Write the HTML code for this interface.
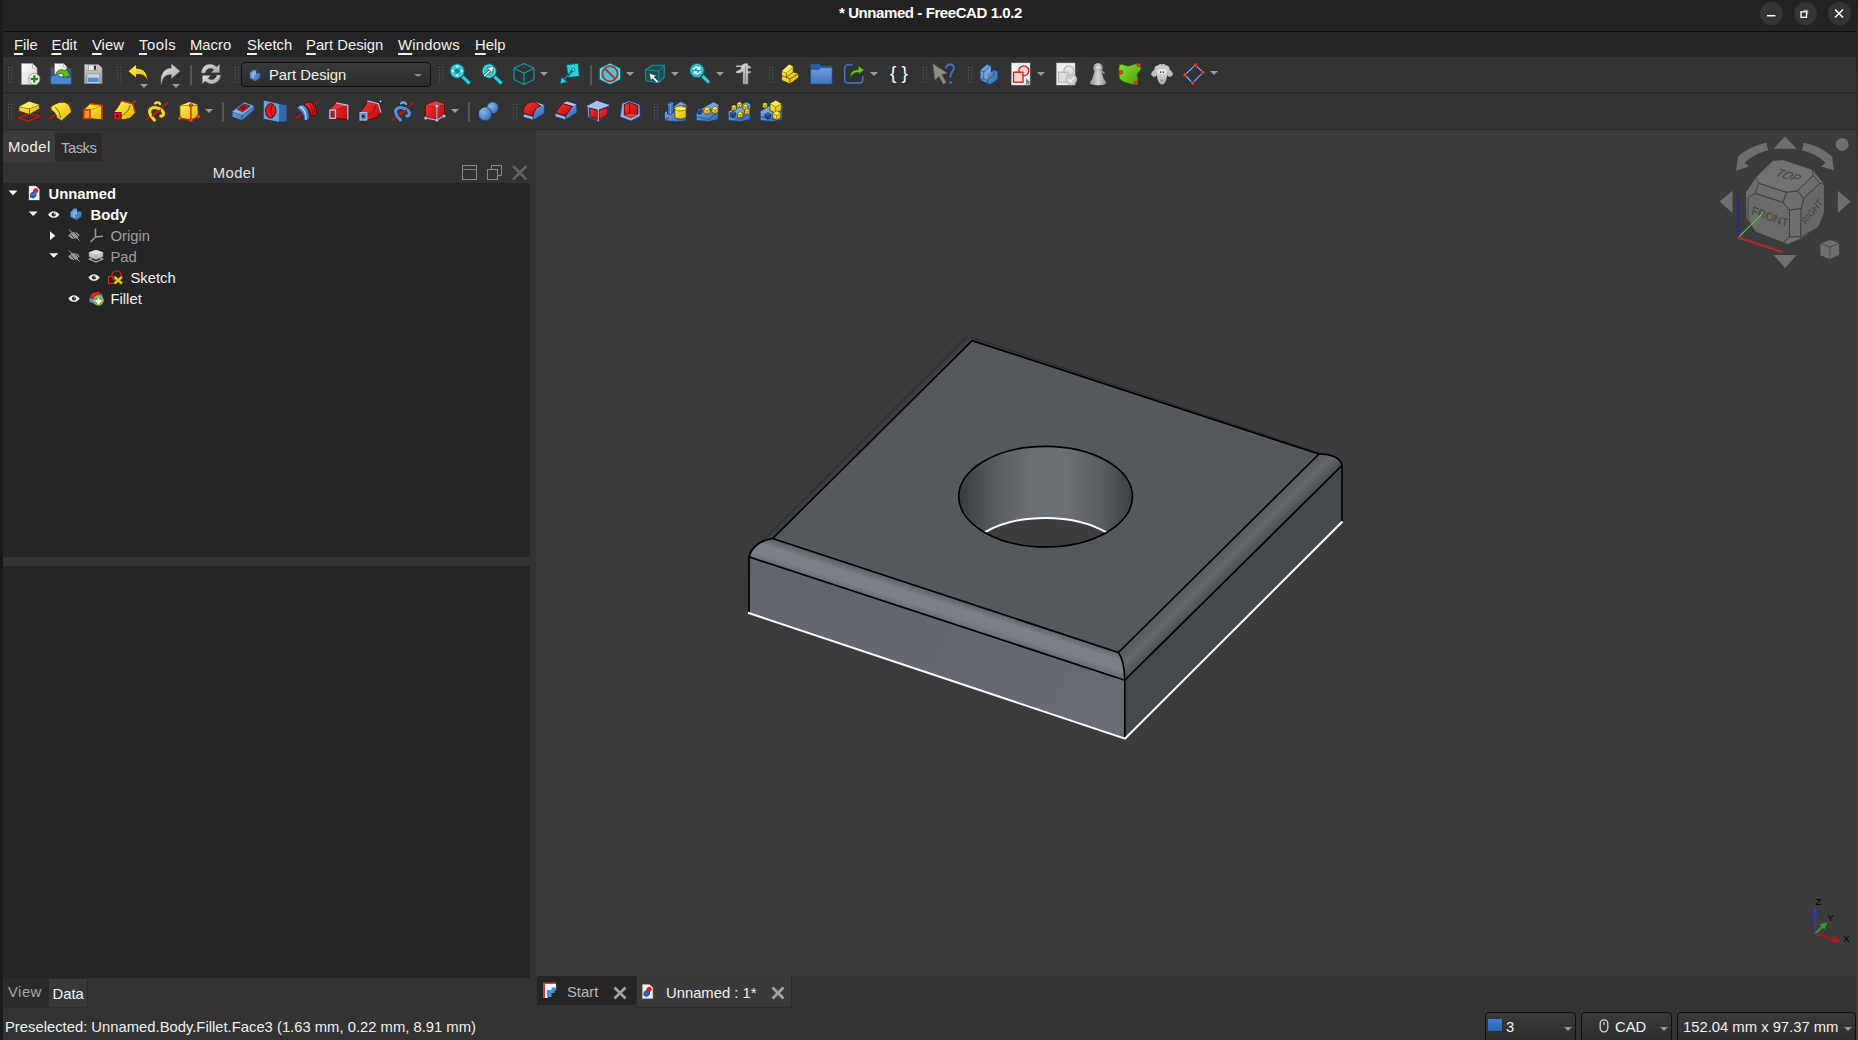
<!DOCTYPE html>
<html lang="en">
<head>
<meta charset="utf-8">
<title>* Unnamed - FreeCAD 1.0.2</title>
<style>
*{box-sizing:border-box;margin:0;padding:0}
html,body{width:1858px;height:1040px;overflow:hidden;background:#333333;}
body{position:relative;font-family:"Liberation Sans",sans-serif;font-size:14.8px;color:#f0f0f0;}
.abs{position:absolute}
#edgeL{left:0;top:0;width:3px;height:1040px;background:#1a1a1a}
#edgeR{left:1856px;top:0;width:2px;height:1040px;background:linear-gradient(#2a1b23 0,#33222b 57px,#3c2a34 130px,#4a3742 200px,#4a3742 100%)}
#titlebar{left:3px;top:0;width:1853px;height:31px;background:#222222}
#titleline{left:3px;top:31px;width:1853px;height:1px;background:#0c0c0c}
#title{left:1.500px;top:0;width:1858px;height:26px;line-height:26px;text-align:center;font-weight:bold;font-size:15px;letter-spacing:-.42px;color:#ffffff;white-space:pre}
.wbtn{top:2px;width:23px;height:23px;border-radius:50%;background:#353535}
#menubar{left:3px;top:32px;width:1853px;height:25px;background:#252525}
.mi{top:33px;height:25px;line-height:25px;white-space:pre;color:#f2f2f2}
.mi u{text-decoration:underline;text-underline-offset:2.500px;text-decoration-thickness:1.800px}
#tb1{left:3px;top:57px;width:1853px;height:36px;background:#333333}
#tbsep{left:3px;top:92px;width:1853px;height:2px;background:#2a2a2a}
#tb2{left:3px;top:94px;width:1853px;height:35px;background:#333333}
#tbbot{left:3px;top:129px;width:1853px;height:1px;background:#2a2a2a}
.ic{position:absolute;width:24px;height:24px;overflow:visible}
.grip{position:absolute;width:6px;height:18px;background-image:radial-gradient(circle,#5a5a5a 0.8px,transparent 1.1px);background-size:3px 3px}
.vsep{position:absolute;width:2px;height:20px;background:#555}
.dd{position:absolute;width:0;height:0;border-left:4px solid transparent;border-right:4px solid transparent;border-top:4px solid #9a9a9a}
#view3d{left:536px;top:130px;width:1320px;height:846px;background:#3c3c3c}
#tree{left:3px;top:183px;width:527px;height:374px;background:#252525}
#prop{left:3px;top:566px;width:527px;height:412px;background:#252525}
#split{left:3px;top:557px;width:527px;height:9px;background:#333}
#wbcombo{left:241px;top:62px;width:190px;height:25px;border:1px solid #0e0e0e;border-radius:4px;background:linear-gradient(#3a3a3a,#2c2c2c);font-size:14.8px;color:#f0f0f0}
.sb{top:1012px;height:30px;border:1px solid #0e0e0e;border-radius:4px;background:linear-gradient(#3a3a3a,#2e2e2e)}
.tr{position:absolute;height:21px;line-height:21px;white-space:pre;font-size:14.8px}
</style>
</head>
<body>
<div class="abs" id="edgeL"></div>
<div class="abs" id="edgeR"></div>
<div class="abs" id="titlebar"></div>
<div class="abs" id="titleline"></div>
<div class="abs" id="title">* Unnamed - FreeCAD 1.0.2</div>
<div class="abs" id="menubar"></div>
<div class="abs" id="tb1"></div>
<div class="abs" id="tbsep"></div>
<div class="abs" id="tb2"></div>
<div class="abs" id="tbbot"></div>
<div class="abs" id="view3d"></div>
<div class="abs" id="tree"></div>
<div class="abs" id="split"></div>
<div class="abs" id="prop"></div>
<div class="abs mi" style="left:14px"><u>F</u>ile</div>
<div class="abs mi" style="left:51.5px"><u>E</u>dit</div>
<div class="abs mi" style="left:92px"><u>V</u>iew</div>
<div class="abs mi" style="left:139px;letter-spacing:.55px"><u>T</u>ools</div>
<div class="abs mi" style="left:190px"><u>M</u>acro</div>
<div class="abs mi" style="left:247px"><u>S</u>ketch</div>
<div class="abs mi" style="left:306px"><u>P</u>art Design</div>
<div class="abs mi" style="left:398px;letter-spacing:.25px"><u>W</u>indows</div>
<div class="abs mi" style="left:475px"><u>H</u>elp</div>
<!--MENU-->
<div class="abs wbtn" style="left:1760px"></div><div class="abs wbtn" style="left:1793.500px"></div><div class="abs wbtn" style="left:1827.500px"></div>
<svg class="abs" style="left:1760px;top:2px" width="92" height="23" viewBox="0 0 92 23"><path d="M7 13.700h8.500" stroke="#fff" stroke-width="1.500"/><path d="M43.500 8.300h4.200v4.200" fill="none" stroke="#aaa" stroke-width="1"/><rect x="41" y="9.800" width="5.500" height="5.500" fill="none" stroke="#fff" stroke-width="1.300"/><path d="M75 7.500l8 8M83 7.500l-8 8" stroke="#fff" stroke-width="1.500"/></svg>

<svg width="0" height="0" style="position:absolute"><defs>
<linearGradient id="gy" x1="0" y1="0" x2="1" y2="1"><stop offset="0" stop-color="#fff45e"/><stop offset="1" stop-color="#e2b400"/></linearGradient>
<linearGradient id="gr" x1="0" y1="0" x2="1" y2="1"><stop offset="0" stop-color="#f43a3a"/><stop offset="1" stop-color="#b80808"/></linearGradient>
<linearGradient id="gb" x1="0" y1="0" x2="1" y2="1"><stop offset="0" stop-color="#86b2e6"/><stop offset="1" stop-color="#2f65ac"/></linearGradient>
<linearGradient id="gpage" x1="0" y1="0" x2="1" y2="1"><stop offset="0" stop-color="#ffffff"/><stop offset="1" stop-color="#d4d4d4"/></linearGradient>
<linearGradient id="ggrey" x1="0" y1="0" x2="0" y2="1"><stop offset="0" stop-color="#d2d2cc"/><stop offset="1" stop-color="#9c9c96"/></linearGradient>
<linearGradient id="gsil" x1="0" y1="0" x2="1" y2="1"><stop offset="0" stop-color="#e2e2e2"/><stop offset="1" stop-color="#a6a6a6"/></linearGradient>
<linearGradient id="gsil2" x1="0" y1="0" x2="1" y2="0"><stop offset="0" stop-color="#8c8c8c"/><stop offset=".5" stop-color="#d6d6d6"/><stop offset="1" stop-color="#8c8c8c"/></linearGradient>
<linearGradient id="gfold" x1="0" y1="0" x2="0" y2="1"><stop offset="0" stop-color="#6f9fe0"/><stop offset="1" stop-color="#3f74c2"/></linearGradient>
<linearGradient id="ggreen" x1="0" y1="0" x2="1" y2="1"><stop offset="0" stop-color="#8ae234"/><stop offset="1" stop-color="#4e9a06"/></linearGradient>
<radialGradient id="gbs" cx=".35" cy=".35" r=".8"><stop offset="0" stop-color="#8ab4e8"/><stop offset="1" stop-color="#2f62a8"/></radialGradient>
<linearGradient id="gsheep" x1="0" y1="0" x2="0" y2="1"><stop offset="0" stop-color="#e6e6e6"/><stop offset="1" stop-color="#a8a8a8"/></linearGradient>
</defs></svg>
<svg class="ic" style="left:17px;top:62px" viewBox="0 0 24 24"><path d="M4.5 1.5h11l4.5 4.5v16.5h-15.5z" fill="url(#gpage)" stroke="#9a9a9a" stroke-width=".8"/><path d="M15.5 1.5v4.5h4.5z" fill="#fff" stroke="#9a9a9a" stroke-width=".6"/><circle cx="17.3" cy="17" r="5.6" fill="#f4f4f4" stroke="#8a8a8a" stroke-width=".8"/><path d="M17.3 13.3v7.4M13.6 17h7.4" stroke="#2f8a12" stroke-width="2.3"/></svg>
<svg class="ic" style="left:49px;top:62px" viewBox="0 0 24 24"><path d="M5.5 1.5h9l3.5 3.5v11h-12.5z" fill="url(#gpage)" stroke="#8a8a8a" stroke-width=".7"/><path d="M14.5 1.5v3.5h3.5z" fill="#fff" stroke="#8a8a8a" stroke-width=".5"/><path d="M1.8 5.5h3v9h-3z" fill="#2d5a9a"/><path d="M18.5 6.5h3.7v9h-3.7z" fill="#2d5a9a"/><path d="M6 14.5c1-6 6-8.500 10-5.500l1.500-2 4 7.500-8 .5 1.500-2.300c-3-2-6.500-1-9 1.800z" fill="#63b820" stroke="#2c6a08" stroke-width=".8" stroke-linejoin="round"/><path d="M1.800 14.500c3-1.500 6-2 9.500 0s7 1.500 10.900 0v7.700h-20.400z" fill="#4a88d4" stroke="#23508f" stroke-width=".8"/></svg>
<svg class="ic" style="left:81px;top:62px" viewBox="0 0 24 24"><path d="M3.500 2.500h14l3.500 3.500v15.500h-17.500z" fill="url(#ggrey)" stroke="#8e8e86" stroke-width=".9"/><rect x="7.500" y="3" width="8.500" height="5.500" fill="#f4f4f4" stroke="#777" stroke-width=".5"/><rect x="12.800" y="3.600" width="2.200" height="4.200" fill="#333"/><rect x="6" y="12" width="12.500" height="9" fill="#e8e8e8" stroke="#888" stroke-width=".6"/><rect x="6.700" y="15.500" width="11" height="4.500" fill="#4f8fdc"/><path d="M6.700 14h11" stroke="#b0b0b0" stroke-width=".8"/></svg>
<svg class="ic" style="left:126px;top:62px" viewBox="0 0 24 24"><path d="M2 9.200l8.500-7.200v4.200c7.500 0 11.500 5 11.300 13.500c-1.600-5.200-5-7.800-11.300-7.200v4z" fill="url(#gy)" stroke="#3a3000" stroke-width=".9" stroke-linejoin="round"/></svg>
<svg class="ic" style="left:158px;top:62px" viewBox="0 0 24 24"><path d="M22 9.200l-8.500-7.200v4.200c-7.500 0-11.500 6-10.300 16.500c1-7.200 4-10.800 10.300-10.200v4z" fill="url(#gsil)" stroke="#8a8a8a" stroke-width=".5" stroke-linejoin="round"/></svg>
<svg class="ic" style="left:199px;top:62px" viewBox="0 0 24 24"><path d="M2.500 11c0-6 5.500-9.500 10.500-8.500c2 .4 3.500 1.300 4.800 2.500l2.700-2.700v8.200h-8.200l2.800-2.800c-2-1.800-5-2.200-7-.3c-1.300 1.200-1.800 2.300-1.900 3.600z" fill="url(#gsil)" stroke="#8a8a8a" stroke-width=".4"/><path d="M21.500 13c0 6-5.500 9.500-10.500 8.500c-2-.4-3.500-1.300-4.800-2.500l-2.700 2.700v-8.200h8.200l-2.800 2.800c2 1.800 5 2.200 7 .3c1.300-1.200 1.800-2.300 1.900-3.600z" fill="url(#gsil)" stroke="#8a8a8a" stroke-width=".4"/></svg>
<svg class="ic" style="left:447px;top:62px" viewBox="0 0 24 24"><path d="M15.500 14.500l6 6" stroke="#0a5a62" stroke-width="5" stroke-linecap="round"/><path d="M15.500 14.500l6 6" stroke="#35cfd8" stroke-width="3" stroke-linecap="round"/><circle cx="10.200" cy="9" r="7.300" fill="#2cc3cc" stroke="#0a5a62" stroke-width="1.200"/><circle cx="10.200" cy="9" r="5.800" fill="none" stroke="#7ae6ea" stroke-width=".8"/><circle cx="10.200" cy="9" r="2.300" fill="#12868e"/><path d="M10.200 3.200l1.800 2.300h-3.600zM10.200 14.800l1.800-2.300h-3.600zM4.400 9l2.300-1.800v3.600zM16 9l-2.300-1.800v3.600z" fill="#f2ffff"/></svg>
<svg class="ic" style="left:479px;top:62px" viewBox="0 0 24 24"><path d="M15.500 14.500l6 6" stroke="#0a5a62" stroke-width="5" stroke-linecap="round"/><path d="M15.500 14.500l6 6" stroke="#35cfd8" stroke-width="3" stroke-linecap="round"/><circle cx="10.200" cy="9" r="7.300" fill="#2cc3cc" stroke="#0a5a62" stroke-width="1.200"/><circle cx="10.200" cy="9" r="5.800" fill="none" stroke="#7ae6ea" stroke-width=".8"/><path d="M5.200 14l5.500-5.500" stroke="#0a5a62" stroke-width="2.600"/><path d="M5.200 14l5.500-5.500" stroke="#fff" stroke-width="1.300"/><path d="M14.800 4.200l-1.500 6.500-5-5z" fill="#fff" stroke="#0a5a62" stroke-width=".6"/></svg>
<svg class="ic" style="left:512px;top:62px" viewBox="0 0 24 24"><path d="M12 1.500l10 4.800v11.200l-10 5-10-5v-11.200z" fill="#1c3a3e" fill-opacity=".45" stroke="#1aa8b2" stroke-width="1" stroke-linejoin="round"/><path d="M2 6.300l10 4.900 10-4.900M12 11.200v11.300" fill="none" stroke="#1aa8b2" stroke-width="1"/><path d="M12 1.500v5M2 17.500l5-2.300M22 17.500l-5-2.300" stroke="#1a8a92" stroke-width=".7" stroke-dasharray="1.500 1.500"/></svg>
<svg class="ic" style="left:558px;top:62px" viewBox="0 0 24 24"><path d="M8.500 2.500l12-1 .8 13-11.500 1z" fill="#2fd0da" stroke="#0a5a62" stroke-width="1" stroke-linejoin="round"/><path d="M15 8l-9.500 10" stroke="#0a5a62" stroke-width="2.400"/><path d="M15 8l-9.500 10" stroke="#2fd0da" stroke-width="1" stroke-dasharray="2 1.500"/><path d="M2 22l1.500-7 5.500 5z" fill="#2fd0da" stroke="#0a5a62" stroke-width=".9" stroke-linejoin="round"/><circle cx="15.300" cy="7.800" r="1.400" fill="#9ff" stroke="#0a5a62" stroke-width=".8"/></svg>
<svg class="ic" style="left:598px;top:62px" viewBox="0 0 24 24"><path d="M12 .800l10.800 5.500v11.300l-10.800 5.200-10.900-5.200v-11.300z" fill="#3fc6d2" stroke="#0a5660" stroke-width="1.200" stroke-linejoin="round"/><path d="M12 2.400l9.300 4.800v9.600l-9.300 4.500-9.400-4.500v-9.600z" fill="none" stroke="#8eeaf0" stroke-width=".7"/><circle cx="12" cy="11.700" r="7.600" fill="#4fc4d0" stroke="#b82c2c" stroke-width="1.700"/><path d="M6.600 6.300l10.800 10.800" stroke="#b82c2c" stroke-width="2"/></svg>
<svg class="ic" style="left:643px;top:62px" viewBox="0 0 24 24"><path d="M2.400 7.800l7.200-4.600h11.600v11.800l-5.400 5.700-12.900-2z" fill="#0f5a62" fill-opacity=".6" stroke="#17909a" stroke-width="1.100" stroke-linejoin="round"/><path d="M2.400 7.800l13.400 1.300 5.400-5.900M15.800 9.100v11.600" fill="none" stroke="#17909a" stroke-width="1"/><path d="M9.600 3.200v10.500l11.600 1.300M9.600 13.700l-6.700 5" stroke="#138088" stroke-width=".6" stroke-dasharray="1.500 1.500" fill="none"/><path d="M6.200 11.300l1.600 7.200 1.800-2 4.400 4.400 1.500-1.500-4.400-4.400 2.300-1.400z" fill="#fff" stroke="#0a4a52" stroke-width=".6" stroke-linejoin="round"/></svg>
<svg class="ic" style="left:687px;top:62px" viewBox="0 0 24 24"><path d="M15 13.500l6 6" stroke="#0a5a62" stroke-width="5" stroke-linecap="round"/><path d="M15 13.500l6 6" stroke="#35cfd8" stroke-width="3" stroke-linecap="round"/><circle cx="10" cy="8.500" r="7.300" fill="#1fa8b4" stroke="#0a5a62" stroke-width="1.200"/><circle cx="10" cy="8.500" r="5.800" fill="none" stroke="#5adbe2" stroke-width=".8"/><path d="M5.500 8c.3-3 4-4.800 6.800-2.800l1.200-1.200v4h-4l1.300-1.300c-1.500-1-3.400-.3-3.600 1.300z" fill="#c8ffff"/><path d="M14.500 9c-.3 3-4 4.800-6.800 2.800l-1.200 1.200v-4h4l-1.300 1.300c1.500 1 3.400 .3 3.600-1.300z" fill="#c8ffff"/></svg>
<svg class="ic" style="left:733px;top:62px" viewBox="0 0 24 24"><path d="M3 3.500h5l3.500-2h3.500v2l3 1.200v1.500h-3v3h3v1.200l-3 1v10.600h-5v-12.500l-3 1.500h-4v-1.500l5-2.500v-2h-5z" fill="url(#gsil)" stroke="#7a7a7a" stroke-width=".5"/><path d="M12.500 4v17M11 12h1.500M11 14h1.500M11 16h1.500M11 18h1.500M11 20h1.500" stroke="#777" stroke-width=".6"/></svg>
<svg class="ic" style="left:777px;top:62px" viewBox="0 0 24 24"><path d="M4.700 9.100L12.200 2.400L16.300 4.500V9.900L21.700 11.400V15.600L13 22L4.700 18.400z" fill="url(#gy)" stroke="#4a3c00" stroke-width="1" stroke-linejoin="round"/><path d="M4.700 9.100L9.300 10.900L16.300 4.500M9.300 10.900V15.600M4.700 13.500L13 17L21.700 11.400M13 17V22M9.300 15.600L16.300 9.900" fill="none" stroke="#5a4800" stroke-width=".8"/><path d="M4.700 9.100L12.200 2.400L16.300 4.500L9.300 10.900z" fill="#fff570" fill-opacity=".7"/></svg>
<svg class="ic" style="left:810px;top:62px" viewBox="0 0 24 24"><path d="M.600 3c0-.7.400-1.100 1.100-1.100h8.200l1.600 1.800h9.500c.7 0 1.100.4 1.100 1.100v4h-21.500z" fill="#2a5ca8" stroke="#1c3f75" stroke-width=".6"/><path d="M.600 7.600h8.400l1.500-1.800h11.600v16.200h-21.500z" fill="url(#gfold)" stroke="#234d8c" stroke-width=".6"/></svg>
<svg class="ic" style="left:842px;top:62px" viewBox="0 0 24 24"><path d="M10 2.900h-4.300c-1.800 0-3 1.200-3 3v12.100c0 1.800 1.200 3 3 3h12.100c1.800 0 3-1.200 3-3v-3.500" fill="none" stroke="#1f4f8c" stroke-width="2.100" stroke-linecap="round"/><path d="M10 2.900h-4.300c-1.800 0-3 1.200-3 3v12.100c0 1.800 1.200 3 3 3h12.100c1.800 0 3-1.200 3-3v-3.500" fill="none" stroke="#6a98d4" stroke-width=".7" stroke-linecap="round"/><path d="M8.400 15.500c-.5-5 2.500-8 7.800-7.800v-4l5.800 4.200-5.300 4.400v-1.800c-3.500-.2-6.300 1.200-8.300 5z" fill="#6cc81e" stroke="#245a06" stroke-width=".9" stroke-linejoin="round"/></svg>
<svg class="ic" style="left:887px;top:62px" viewBox="0 0 24 24"><text x="12" y="17.200" text-anchor="middle" font-family="Liberation Sans,sans-serif" font-size="19" fill="#fafafa" font-weight="400">{ }</text></svg>
<svg class="ic" style="left:931px;top:62px" viewBox="0 0 24 24"><path d="M2 2l14 9-5.500 1.500 4.500 8-2.800 1.500-4.200-8-4 4z" fill="#8c8c84" stroke="#6a6a64" stroke-width=".6" stroke-linejoin="round"/><path d="M15 6.500c0-2.500 1.800-4 4-4s4 1.500 4 3.800c0 3-3.500 3.700-3.500 7.200v2" fill="none" stroke="#3f78c0" stroke-width="1.800"/><circle cx="19.500" cy="20.500" r="1.300" fill="#3f78c0"/></svg>
<svg class="ic" style="left:977px;top:62px" viewBox="0 0 24 24"><path d="M3 8l7-6 4 2v6l3-2.500 4 2v8l-8 5.500-10-5z" fill="url(#gb)" stroke="#163a6e" stroke-width="1" stroke-linejoin="round"/><path d="M3 8l4 2 7-6M7 10v6.500l3.500 1.500 6.500-5.500v-5M10.500 18v5M7 16.500l-4 1.500" fill="none" stroke="#1c4680" stroke-width=".8"/><path d="M7 10l7-6v6l-3.500 3v5l-3.500-1.500z" fill="#8ab4e4" fill-opacity=".6"/></svg>
<svg class="ic" style="left:1009px;top:62px" viewBox="0 0 24 24"><rect x="2.500" y="1" width="18.500" height="22" fill="#f6f6f6" stroke="#bbb" stroke-width=".5"/><circle cx="14.800" cy="8.800" r="5" fill="#f7d6d2" stroke="#d01818" stroke-width="1.300"/><rect x="4.500" y="10.200" width="9.500" height="10" fill="#f2cfcb" fill-opacity=".85" stroke="#d01818" stroke-width="1.300"/><path d="M17 16.500l4.500 4-2 .3 1 2-1 .5-1-2-1.500 1.200z" fill="#888" stroke="#555" stroke-width=".3"/></svg>
<svg class="ic" style="left:1054px;top:62px" viewBox="0 0 24 24"><rect x="2.500" y="1" width="18.500" height="22" fill="#eeeeee" stroke="#bbb" stroke-width=".5"/><circle cx="14.800" cy="8.800" r="5" fill="#e4e4e4" stroke="#b8b8b8" stroke-width="1.300"/><rect x="4.500" y="10.200" width="9.500" height="10" fill="#dcdcdc" fill-opacity=".9" stroke="#b8b8b8" stroke-width="1.300"/><circle cx="17.300" cy="17.300" r="5.500" fill="#c9c9c9" stroke="#aaa" stroke-width=".6"/><path d="M14.300 17.300l2.200 2.400 3.800-4.600" fill="none" stroke="#eee" stroke-width="1.700"/></svg>
<svg class="ic" style="left:1086px;top:62px" viewBox="0 0 24 24"><path d="M4 21c0-1.500 1-2.500 2-3.500l3-9h6l3 9c1 1 2 2 2 3.500c0 1.500-3.500 2.200-8 2.200s-8-.7-8-2.200z" fill="url(#gsil2)"/><circle cx="12" cy="6" r="4.800" fill="url(#gsil2)"/><circle cx="12.300" cy="5.500" r="2.600" fill="#d8d8d8" stroke="#a8a8a8" stroke-width=".7"/><path d="M14 7.500l4.500 4" stroke="#a0a0a0" stroke-width="1.500"/></svg>
<svg class="ic" style="left:1118px;top:62px" viewBox="0 0 24 24"><path d="M1.600 2.600c3-1 6 1.500 8.600 1.500s6-3 10.700-2.400c1.500 2 2.300 3.500 2.100 5.500c-.5 2-3 3-3.600 4.900s1 4 .6 6.100c-.3 2-1 3.500-2.500 4.300c-3 .3-6.500-1-9.200-1.800s-5.500-2-6.700-4.300c-.8-2-.2-4-.6-6.100s0-5.500.600-7.700z" fill="url(#ggreen)" stroke="#2c6a08" stroke-width=".9"/><circle cx="20.900" cy="2.900" r="1.900" fill="#e0442a" stroke="#7a1a0a" stroke-width=".6"/><circle cx="2.800" cy="10.300" r="1.900" fill="#e0442a" stroke="#7a1a0a" stroke-width=".6"/><circle cx="18.200" cy="21" r="1.900" fill="#e0442a" stroke="#7a1a0a" stroke-width=".6"/></svg>
<svg class="ic" style="left:1150px;top:62px" viewBox="0 0 24 24"><path d="M1 12.500c.5-3 2.500-5 5.500-5.500l.5 6c-1.500 2.500-4 2.500-6-.5zM23 12.500c-.5-3-2.500-5-5.500-5.500l-.5 6c1.500 2.500 4 2.500 6-.5z" fill="#bdbdbd"/><path d="M4.500 8c-.5-2.500 1-4.500 3.500-4.500c1-1.500 3-2 4-1c1-1 3-.5 4 1c2.500 0 4 2 3.500 4.500c-1 2-3 2.500-4.500 2h-6c-1.500.5-3.500 0-4.500-2z" fill="#c9c9c9"/><path d="M6.700 10c0-2 2.300-3.300 5.300-3.300s5.300 1.300 5.300 3.300c0 5-1.500 12.500-5.300 12.500s-5.300-7.500-5.300-12.500z" fill="url(#gsheep)"/><rect x="8" y="8.500" width="8" height="3" rx="1.500" fill="#f8f8f8"/><circle cx="10.600" cy="10.100" r=".9" fill="#333"/><circle cx="13.400" cy="10.100" r=".9" fill="#333"/><path d="M10.500 18.300h3" stroke="#777" stroke-width=".9"/></svg>
<svg class="ic" style="left:1182px;top:62px" viewBox="0 0 24 24"><path d="M13.400 2.900l7.600 7.400-10.400 10.700-7.700-8z" fill="none" stroke="#12305a" stroke-width="2.600" stroke-linejoin="round"/><path d="M13.400 2.900l7.600 7.400-10.400 10.700-7.700-8z" fill="none" stroke="#8cb4e6" stroke-width="1.100" stroke-linejoin="round"/><circle cx="13.400" cy="2.900" r="1.900" fill="#e0442a" stroke="#7a1a0a" stroke-width=".6"/><circle cx="21" cy="10.300" r="1.900" fill="#e0442a" stroke="#7a1a0a" stroke-width=".6"/><circle cx="10.600" cy="21" r="1.900" fill="#e0442a" stroke="#7a1a0a" stroke-width=".6"/><circle cx="2.900" cy="13" r="1.900" fill="#e0442a" stroke="#7a1a0a" stroke-width=".6"/></svg>
<svg class="ic" style="left:17px;top:99px" viewBox="0 0 24 24"><path d="M1.400 18.700l10.600-4 10.800 2.400-10.800 5.200z" fill="none" stroke="#c81414" stroke-width="1.700" stroke-linejoin="round"/><path d="M1.900 7.800l10.100-5.400 10.300 3.400v4.100l-9.800 5.700-10.600-3.600z" fill="url(#gy)" stroke="#4a3c00" stroke-width=".9" stroke-linejoin="round"/><path d="M1.900 7.800l10.600 1.800 9.800-3.800M12.500 9.600v6" fill="none" stroke="#5a4800" stroke-width=".8"/><path d="M1.900 7.800l10.100-5.400 10.300 3.400-9.800 3.800z" fill="#fff570" fill-opacity=".75"/></svg>
<svg class="ic" style="left:49px;top:99px" viewBox="0 0 24 24"><path d="M0 19.800l22.500-16.200" stroke="#c81414" stroke-width="1.500"/><path d="M1.700 8.300c3-3 7-5 11.400-5.100c3 0 5 1 6.700 2.600c1.500 2.400 2.300 4.600 2.600 7.200l-9.900 8.800l-4.600-3.100c-.5-3-1.800-5.500-5.700-7.800z" fill="url(#gy)" stroke="#4a3c00" stroke-width=".9" stroke-linejoin="round"/><path d="M5.800 8.100c3.500 2.500 5.300 6 5.700 10.600" fill="none" stroke="#5a4800" stroke-width=".8"/></svg>
<svg class="ic" style="left:81px;top:99px" viewBox="0 0 24 24"><path d="M2.800 10.900l6.700-6.200 11.400 1.600v14.400l-11.900-1z" fill="url(#gy)" stroke="#4a3c00" stroke-width=".9" stroke-linejoin="round"/><path d="M9 10.900l11.900-4.600" stroke="#5a4800" stroke-width=".8"/><path d="M2.800 10.900l6.700-6.200 11.400 1.600-11.900 4.600z" fill="#ffd820"/><path d="M9.500 4.700l11.400 1.600v14.400" fill="none" stroke="#d83a10" stroke-width="1.500"/><rect x="2.800" y="10.900" width="6.200" height="8.800" fill="#ff9a18" stroke="#d82a10" stroke-width="1.500"/></svg>
<svg class="ic" style="left:113px;top:99px" viewBox="0 0 24 24"><path d="M.600 13.500c3-3.500 6-7.500 7.500-11.600l11.600 2.800 2.600 9-4.600 5c-3 1.300-6 2-9.600 2z" fill="url(#gy)" stroke="#4a3c00" stroke-width=".9" stroke-linejoin="round"/><path d="M8.600 1.900l11.100 2.800 2.600 9" fill="none" stroke="#d83a10" stroke-width="1.400"/><path d="M8.100 17c4-1.500 8-5.500 9-11" fill="none" stroke="#5a4800" stroke-width=".8"/><rect x=".8" y="13.500" width="7.300" height="7.200" fill="#e01818" stroke="#9a0000" stroke-width="1"/><rect x="3" y="15.700" width="2.800" height="2.800" fill="#3a0000"/><circle cx="21.500" cy="2.600" r="1.300" fill="#d82a10"/></svg>
<svg class="ic" style="left:145px;top:99px" viewBox="0 0 24 24"><path d="M.700 21.200l22.200-17.500" stroke="#c81414" stroke-width="1.500"/><g fill="none" stroke-linecap="round"><path d="M9.400 21c-1.500-2-4.500-4-4.800-8c-.2-3.500 3-5 6.500-4.300c3.500.7 7 2.500 7.300 5.500c.2 2-1 3-2.600 2.800" stroke="#4a3c00" stroke-width="4.800"/><path d="M9.400 21c-1.500-2-4.500-4-4.800-8c-.2-3.500 3-5 6.500-4.300c3.500.7 7 2.500 7.300 5.500c.2 2-1 3-2.600 2.800" stroke="#f2d42a" stroke-width="3.200"/><path d="M10 4.500c1.500-1.500 4-1.500 5 .5" stroke="#4a3c00" stroke-width="3.800"/><path d="M10 4.500c1.500-1.500 4-1.500 5 .5" stroke="#f6e04a" stroke-width="2.300"/></g><path d="M7 17.500l9-7" stroke="#c81414" stroke-width="1.400"/></svg>
<svg class="ic" style="left:177px;top:99px" viewBox="0 0 24 24"><path d="M2.800 6.500l9.800-3.600 8.300 2.900.5 11.800-7.500 3.700-11.100-2.100z" fill="url(#gy)" stroke="#4a3c00" stroke-width=".9" stroke-linejoin="round"/><path d="M2.800 6.500l11.100 0 7-0.700" fill="none" stroke="#5a4800" stroke-width=".8"/><path d="M2.800 6.500l9.800-3.600 8.300 2.900-7 .7z" fill="#fff570" fill-opacity=".7"/><path d="M13.900 6.500v14.800M2.800 19.200l11.100 2.100 7.500-3.700" fill="none" stroke="#c82a10" stroke-width="1.400"/><circle cx="13.900" cy="6.300" r="1.800" fill="#e03a20" stroke="#8a1a0a" stroke-width=".5"/><circle cx="2.800" cy="19.200" r="1.800" fill="#e8484a" stroke="#8a1a0a" stroke-width=".5"/><circle cx="13.900" cy="21.300" r="1.800" fill="#e8484a" stroke="#8a1a0a" stroke-width=".5"/><circle cx="21.400" cy="17.600" r="1.800" fill="#e8484a" stroke="#8a1a0a" stroke-width=".5"/></svg>
<svg class="ic" style="left:230px;top:99px" viewBox="0 0 24 24"><path d="M2.100 12.800l12.100-9.600 10 3.800v4.100l-12.100 10.700-10-3.800z" fill="url(#gb)" stroke="#163a6e" stroke-width=".9" stroke-linejoin="round"/><path d="M2.100 12.800l10 3.500 12.100-9.300M12.100 16.300v5.500" fill="none" stroke="#1c4680" stroke-width=".8"/><path d="M2.100 12.800l12.100-9.600 10 3.800-12.100 9.300z" fill="#a6c6ee" fill-opacity=".5"/><path d="M7.300 10.100l6.500-5.200 6.200 2.100-7.200 5.800z" fill="#d61414" stroke="#0e2444" stroke-width=".8"/><path d="M9.800 9.600l3.600-2.900 3.400 1.200-3.800 3.100z" fill="#8a0808"/></svg>
<svg class="ic" style="left:262px;top:99px" viewBox="0 0 24 24"><path d="M1.800 1.400l15.200 3.500 7.500 1.400v15.800l-7.500.7-15.200-3.100z" fill="url(#gb)" stroke="#163a6e" stroke-width=".9" stroke-linejoin="round"/><path d="M17 4.900v17.900" stroke="#0e2444" stroke-width=".8"/><path d="M1.800 1.400l15.200 3.500v17.900l-15.200-3.100z" fill="#6f9fd8"/><path d="M17 4.900l7.500 1.400v15.800l-7.500.7z" fill="#3568b0"/><ellipse cx="8.700" cy="11.800" rx="5.200" ry="7.200" fill="#e01a1a" stroke="#3a0a2a" stroke-width=".9"/><path d="M10.800 5.500c-2.500 3-2.500 9.600 0 12.600" fill="none" stroke="#8a0000" stroke-width="1"/></svg>
<svg class="ic" style="left:294px;top:99px" viewBox="0 0 24 24"><path d="M1.800 19.400l23.100-17.300" stroke="#d01010" stroke-width="1.600"/><path d="M2.900 9c2-2.200 4-3 6.500-3c4 3 6.500 8 6 13.500c-1.500 1.600-3.500 2.300-5.500 2.200c.5-5-2-10-7-12.700z" fill="url(#gb)" stroke="#163a6e" stroke-width=".9" stroke-linejoin="round"/><path d="M6 7c4 3 6.500 8 6 14" fill="none" stroke="#c6dcf6" stroke-width="1.200"/><path d="M10.500 5.500c1.500-2.500 5-3.500 7.500-1.500c3.500 2.500 5.500 7 4.500 11c-1.500 1.500-4 2.300-6 1.500c0-4.500-2-8.500-6-11z" fill="url(#gr)" stroke="#5a0000" stroke-width=".9" stroke-linejoin="round"/><path d="M13.500 3.500c3.500 2.500 5.500 7 5 11.500M16.500 3c3 2.500 4.500 6.500 4 10.500" fill="none" stroke="#7a0000" stroke-width=".8"/></svg>
<svg class="ic" style="left:327px;top:99px" viewBox="0 0 24 24"><path d="M2.900 11.100l6.200-7.200 11.700 2.400v14.400l-12.400-1.400z" fill="url(#gr)" stroke="#5a0000" stroke-width=".9" stroke-linejoin="round"/><path d="M8.400 11.100l12.400-4.800" stroke="#7a0000" stroke-width=".8"/><path d="M2.900 11.100l6.200-7.200 11.700 2.400-12.400 4.800z" fill="#f23030"/><path d="M9.100 3.900l11.700 2.400v14.400" fill="none" stroke="#a8c4ea" stroke-width="1.300"/><rect x="2.900" y="11.100" width="5.500" height="8.200" fill="#a81818" stroke="#a8c4ea" stroke-width="1.400"/></svg>
<svg class="ic" style="left:359px;top:99px" viewBox="0 0 24 24"><path d="M1 13.500c3-3.500 6-7.500 7.300-11.600l11.100 2.800 2.600 9-4.600 5c-3 1.300-6 2-9.600 2.400z" fill="url(#gr)" stroke="#5a0000" stroke-width=".9" stroke-linejoin="round"/><path d="M8.300 1.900l11.100 2.800 2.600 9" fill="none" stroke="#a8c4ea" stroke-width="1.200"/><path d="M7.800 17c4-1.500 8-5.500 9-11" fill="none" stroke="#7a0000" stroke-width=".8"/><rect x="1" y="13.500" width="6.800" height="7.600" fill="#5a8fd4" stroke="#a8c4ea" stroke-width="1"/><rect x="3" y="15.900" width="2.600" height="2.800" fill="#0e2444"/><circle cx="21.500" cy="2.300" r=".9" fill="#e8eef8"/></svg>
<svg class="ic" style="left:391px;top:99px" viewBox="0 0 24 24"><path d="M.700 21.200l22.200-17.500" stroke="#d01010" stroke-width="1.500"/><g fill="none" stroke-linecap="round"><path d="M9.400 21c-1.500-2-4.500-4-4.800-8c-.2-3.500 3-5 6.500-4.300c3.500.7 7 2.500 7.300 5.500c.2 2-1 3-2.600 2.800" stroke="#14305a" stroke-width="4.800"/><path d="M9.400 21c-1.500-2-4.500-4-4.800-8c-.2-3.500 3-5 6.500-4.300c3.500.7 7 2.500 7.300 5.500c.2 2-1 3-2.600 2.800" stroke="#5a8fd4" stroke-width="3.200"/><path d="M10 4.500c1.500-1.500 4-1.500 5 .5" stroke="#14305a" stroke-width="3.800"/><path d="M10 4.500c1.500-1.500 4-1.500 5 .5" stroke="#7aa8e0" stroke-width="2.300"/></g><path d="M7 17.500l9-7" stroke="#d01010" stroke-width="1.400"/></svg>
<svg class="ic" style="left:423px;top:99px" viewBox="0 0 24 24"><path d="M2.300 6.500l10.300-4.500 8.800 3.300v11.800l-7.500 4-11.600-2z" fill="url(#gr)" stroke="#5a0000" stroke-width=".9" stroke-linejoin="round"/><path d="M2.300 6.500l11.600.7 7.500-1.900" fill="none" stroke="#7a0000" stroke-width=".8"/><path d="M2.300 6.500l10.300-4.500 8.800 3.300-7.500 1.900z" fill="#f43a3a"/><path d="M13.900 7.200v13.900M2.700 19.100l11.200 2 7.100-4" fill="none" stroke="#9ab8e0" stroke-width="1.200"/><circle cx="13.900" cy="7.200" r="1.700" fill="#b8cce8" stroke="#44608a" stroke-width=".5"/><circle cx="2.700" cy="19.100" r="1.600" fill="#b8cce8" stroke="#44608a" stroke-width=".5"/><circle cx="13.900" cy="21.100" r="1.600" fill="#b8cce8" stroke="#44608a" stroke-width=".5"/><circle cx="21" cy="17.100" r="1.600" fill="#b8cce8" stroke="#44608a" stroke-width=".5"/></svg>
<svg class="ic" style="left:476px;top:99px" viewBox="0 0 24 24"><circle cx="16.700" cy="8.800" r="6" fill="url(#gbs)" stroke="#163a6e" stroke-width=".8"/><circle cx="9.100" cy="15.100" r="6.800" fill="url(#gbs)" stroke="#163a6e" stroke-width=".8"/><path d="M4 13c1-3 4-4.500 7-4" fill="none" stroke="#a6c6ee" stroke-width=".8"/></svg>
<svg class="ic" style="left:521px;top:99px" viewBox="0 0 24 24"><path d="M12.800 2.800l10.700 3.500.4 7.900-11.400 6.900-10-3.100v-3.800c0-4 1.500-7.500 3.500-9.300s4.500-2.300 6.800-2.100z" fill="url(#gb)" stroke="#163a6e" stroke-width=".9" stroke-linejoin="round"/><path d="M12.800 2.800l10.700 3.500-3.800 .7z" fill="#a6c6ee"/><path d="M2.500 14.900l9.300 2.700.7 3.500-10-3.100z" fill="#9cc0ea" stroke="#163a6e" stroke-width=".6"/><path d="M2.200 11.800c.5-3 2-5.500 3.800-6.900c2-1.500 4.500-2.100 6.800-2.100l6.900 4.200c-3 .5-5 2.500-6.200 5.500l-1.700 4.400-9.300-2.700z" fill="url(#gr)" stroke="#5a0000" stroke-width=".9" stroke-linejoin="round"/><path d="M11.800 16.900l.7 4.200" stroke="#163a6e" stroke-width=".7"/></svg>
<svg class="ic" style="left:553px;top:99px" viewBox="0 0 24 24"><path d="M14.200 2.500l9.300 3.100.7 7.900-11.300 7.200-10.700-3.100v-3.100l7.200-10z" fill="url(#gb)" stroke="#163a6e" stroke-width=".9" stroke-linejoin="round"/><path d="M9.400 4.500l4.800-2 9.300 3.100-4.100 1.700z" fill="#a6c6ee"/><path d="M2.200 14.500l10.300 3.100.4 3.100-10.700-3.100z" fill="#9cc0ea" stroke="#163a6e" stroke-width=".6"/><path d="M2.500 13.500l6.900-9 10 2.800-6.900 9.600z" fill="url(#gr)" stroke="#5a0000" stroke-width=".9" stroke-linejoin="round"/><path d="M12.500 16.900l.4 3.800" stroke="#163a6e" stroke-width=".7"/></svg>
<svg class="ic" style="left:586px;top:99px" viewBox="0 0 24 24"><path d="M10.900 1.800l12 4.100v10.700l-10.700 5.800-10.600-4.400-.4-11z" fill="url(#gb)" stroke="#163a6e" stroke-width=".9" stroke-linejoin="round"/><path d="M1.200 7l9.700-5.200 12 4.100-10.700 4.100z" fill="#a6c0e8"/><path d="M3.500 9l8 2.300v9.300l-7.500-3.100z" fill="url(#gr)" stroke="#5a0000" stroke-width=".9" stroke-linejoin="round"/><path d="M13 11.300l9-3.200v8l-9 4.700z" fill="url(#gr)" stroke="#5a0000" stroke-width=".9" stroke-linejoin="round"/><path d="M1.200 7l11 3 10.700-4.100M12.200 10v12.400" fill="none" stroke="#a6c6ee" stroke-width="1"/></svg>
<svg class="ic" style="left:618px;top:99px" viewBox="0 0 24 24"><path d="M4 4.200l7.600-2.400 10.300 3.800.3 11.700-9.300 4.800-11-4.100z" fill="#8ab0e2" stroke="#163a6e" stroke-width=".9" stroke-linejoin="round"/><path d="M6.400 5.600l5.200-2.100 8.200 3.100v8.300l-6.900 3.800-6.500-2.800z" fill="url(#gr)" stroke="#5a0000" stroke-width=".9" stroke-linejoin="round"/><path d="M11.600 3.500v11l-5.200 1.400M11.600 14.500l8.200.4" fill="none" stroke="#7a0000" stroke-width=".9"/><path d="M6.400 15.900l5.200-1.400 8.200.4-6.900 3.800z" fill="#f03a3a"/></svg>
<svg class="ic" style="left:663px;top:99px" viewBox="0 0 24 24"><path d="M1.500 13.800L17.700 2.800L23.500 5.600V21.800L13 23L1.500 21.400z" fill="url(#gb)" stroke="#163a6e" stroke-width=".9" stroke-linejoin="round"/><path d="M1.500 13.800L17.700 2.800L23.500 5.600V10L12 16z" fill="#8ab0e2" fill-opacity=".55"/><path d="M4.500 5l3-3 3.300 1.600v9.400l-3.300 3-3-1.600z" fill="#3a6eb4" stroke="#0e2444" stroke-width=".8" stroke-linejoin="round"/><path d="M4.500 5l3 1.600 3.300-3M7.500 6.600v9.400" fill="none" stroke="#9cc0ea" stroke-width=".6"/><path d="M11.800 9.500c0-1.500 2.500-2.500 5.700-2.500s5.700 1 5.700 2.500v8c0 1.500-2.500 2.500-5.700 2.500s-5.700-1-5.700-2.500z" fill="url(#gy)" stroke="#4a3c00" stroke-width=".9" stroke-linejoin="round"/><ellipse cx="17.500" cy="9.500" rx="5.700" ry="2.400" fill="#fff36a" stroke="#6a5600" stroke-width=".7"/><path d="M2 20.500l4-1.500M20 8l3.500-2" stroke="#d01010" stroke-width="1.200"/></svg>
<svg class="ic" style="left:695px;top:99px" viewBox="0 0 24 24"><path d="M1.200 12.800L18.4 3.200L23.300 5.6V20.700L14 22.500L1.200 21.600z" fill="url(#gb)" stroke="#163a6e" stroke-width=".9" stroke-linejoin="round"/><path d="M1.200 17.500L14 20.500L23.300 12" fill="none" stroke="#1c4680" stroke-width=".7"/><path d="M1.200 12.800L18.4 3.200L23.300 5.6V9L13 15.500z" fill="#8ab0e2" fill-opacity=".6"/><path d="M4.4 9.4L7.0 10.9V13.9L4.4 15.4L1.8 13.9V10.9z" fill="#2a5a9a" stroke="#0e2444" stroke-width=".8" stroke-linejoin="round"/><path d="M4.4 9.4L7.0 10.9L4.4 12.4L1.8 10.9z" fill="#4a7ab8" fill-opacity=".7"/><path d="M1.8 10.9L4.4 12.4L7.0 10.9M4.4 12.4V15.4" fill="none" stroke="#0e2444" stroke-width=".6"/><path d="M12.0 8.1L15.2 10.0V13.7L12.0 15.5L8.8 13.7V10.0z" fill="url(#gy)" stroke="#4a3c00" stroke-width=".8" stroke-linejoin="round"/><path d="M12.0 8.1L15.2 10.0L12.0 11.8L8.8 10.0z" fill="#fff570" fill-opacity=".7"/><path d="M8.8 10.0L12.0 11.8L15.2 10.0M12.0 11.8V15.5" fill="none" stroke="#6a5600" stroke-width=".6"/><path d="M20.0 7.6L23.2 9.5V13.2L20.0 15.0L16.8 13.2V9.5z" fill="url(#gy)" stroke="#4a3c00" stroke-width=".8" stroke-linejoin="round"/><path d="M20.0 7.6L23.2 9.5L20.0 11.3L16.8 9.5z" fill="#fff570" fill-opacity=".7"/><path d="M16.8 9.5L20.0 11.3L23.2 9.5M20.0 11.3V15.0" fill="none" stroke="#6a5600" stroke-width=".6"/></svg>
<svg class="ic" style="left:727px;top:99px" viewBox="0 0 24 24"><path d="M1.200 12.800L19.1 3.200L23.300 4.9V20.700L14 22.500L1.200 21.600z" fill="url(#gb)" stroke="#163a6e" stroke-width=".9" stroke-linejoin="round"/><path d="M1.200 17.500L14 20.500L23.300 12" fill="none" stroke="#1c4680" stroke-width=".7"/><path d="M1.200 12.800L19.1 3.200L23.300 4.9V9L13 15.500z" fill="#8ab0e2" fill-opacity=".6"/><path d="M6.0 12.4L8.6 13.9V16.9L6.0 18.4L3.4 16.9V13.9z" fill="#2a5a9a" stroke="#0e2444" stroke-width=".8" stroke-linejoin="round"/><path d="M6.0 12.4L8.6 13.9L6.0 15.4L3.4 13.9z" fill="#4a7ab8" fill-opacity=".7"/><path d="M3.4 13.9L6.0 15.4L8.6 13.9M6.0 15.4V18.4" fill="none" stroke="#0e2444" stroke-width=".6"/><path d="M7.0 6.0L9.6 7.5V10.5L7.0 12.0L4.4 10.5V7.5z" fill="url(#gy)" stroke="#4a3c00" stroke-width=".8" stroke-linejoin="round"/><path d="M7.0 6.0L9.6 7.5L7.0 9.0L4.4 7.5z" fill="#fff570" fill-opacity=".7"/><path d="M4.4 7.5L7.0 9.0L9.6 7.5M7.0 9.0V12.0" fill="none" stroke="#6a5600" stroke-width=".6"/><path d="M12.5 3.0L15.1 4.5V7.5L12.5 9.0L9.9 7.5V4.5z" fill="url(#gy)" stroke="#4a3c00" stroke-width=".8" stroke-linejoin="round"/><path d="M12.5 3.0L15.1 4.5L12.5 6.0L9.9 4.5z" fill="#fff570" fill-opacity=".7"/><path d="M9.9 4.5L12.5 6.0L15.1 4.5M12.5 6.0V9.0" fill="none" stroke="#6a5600" stroke-width=".6"/><path d="M18.4 5.3L21.0 6.8V9.8L18.4 11.3L15.8 9.8V6.8z" fill="url(#gy)" stroke="#4a3c00" stroke-width=".8" stroke-linejoin="round"/><path d="M18.4 5.3L21.0 6.8L18.4 8.3L15.8 6.8z" fill="#fff570" fill-opacity=".7"/><path d="M15.8 6.8L18.4 8.3L21.0 6.8M18.4 8.3V11.3" fill="none" stroke="#6a5600" stroke-width=".6"/><path d="M20.1 10.0L22.7 11.5V14.5L20.1 16.0L17.5 14.5V11.5z" fill="url(#gy)" stroke="#4a3c00" stroke-width=".8" stroke-linejoin="round"/><path d="M20.1 10.0L22.7 11.5L20.1 13.0L17.5 11.5z" fill="#fff570" fill-opacity=".7"/><path d="M17.5 11.5L20.1 13.0L22.7 11.5M20.1 13.0V16.0" fill="none" stroke="#6a5600" stroke-width=".6"/><path d="M13.2 12.8L16.0 14.4V17.6L13.2 19.2L10.4 17.6V14.4z" fill="url(#gy)" stroke="#4a3c00" stroke-width=".8" stroke-linejoin="round"/><path d="M13.2 12.8L16.0 14.4L13.2 16.0L10.4 14.4z" fill="#fff570" fill-opacity=".7"/><path d="M10.4 14.4L13.2 16.0L16.0 14.4M13.2 16.0V19.2" fill="none" stroke="#6a5600" stroke-width=".6"/></svg>
<svg class="ic" style="left:759px;top:99px" viewBox="0 0 24 24"><path d="M1.200 12.800L16 3.200L23.300 6V20.700L14 22.500L1.200 21.600z" fill="url(#gb)" stroke="#163a6e" stroke-width=".9" stroke-linejoin="round"/><path d="M1.200 17.500L14 20.500L23.300 12" fill="none" stroke="#1c4680" stroke-width=".7"/><path d="M1.200 12.800L16 3.200L23.300 6V9L13 15.500z" fill="#8ab0e2" fill-opacity=".6"/><path d="M8.8 13.7L11.6 15.3V18.5L8.8 20.1L6.0 18.5V15.3z" fill="#2a5a9a" stroke="#0e2444" stroke-width=".8" stroke-linejoin="round"/><path d="M8.8 13.7L11.6 15.3L8.8 16.9L6.0 15.3z" fill="#4a7ab8" fill-opacity=".7"/><path d="M6.0 15.3L8.8 16.9L11.6 15.3M8.8 16.9V20.1" fill="none" stroke="#0e2444" stroke-width=".6"/><path d="M16.7 1.4L22.4 4.7V11.3L16.7 14.6L11.0 11.3V4.7z" fill="url(#gy)" stroke="#4a3c00" stroke-width=".8" stroke-linejoin="round"/><path d="M16.7 1.4L22.4 4.7L16.7 8.0L11.0 4.7z" fill="#fff570" fill-opacity=".7"/><path d="M11.0 4.7L16.7 8.0L22.4 4.7M16.7 8.0V14.6" fill="none" stroke="#6a5600" stroke-width=".6"/><path d="M6.0 3.7L8.5 5.1V8.0L6.0 9.5L3.5 8.0V5.1z" fill="url(#gy)" stroke="#4a3c00" stroke-width=".8" stroke-linejoin="round"/><path d="M6.0 3.7L8.5 5.1L6.0 6.6L3.5 5.1z" fill="#fff570" fill-opacity=".7"/><path d="M3.5 5.1L6.0 6.6L8.5 5.1M6.0 6.6V9.5" fill="none" stroke="#6a5600" stroke-width=".6"/><path d="M17.8 12.0L21.8 14.3V18.9L17.8 21.2L13.8 18.9V14.3z" fill="url(#gy)" stroke="#4a3c00" stroke-width=".8" stroke-linejoin="round"/><path d="M17.8 12.0L21.8 14.3L17.8 16.6L13.8 14.3z" fill="#fff570" fill-opacity=".7"/><path d="M13.8 14.3L17.8 16.6L21.8 14.3M17.8 16.6V21.2" fill="none" stroke="#6a5600" stroke-width=".6"/></svg>
<div class="dd" style="left:140px;top:84px"></div><div class="dd" style="left:172px;top:84px"></div><div class="dd" style="left:540px;top:72px"></div><div class="dd" style="left:626px;top:72px"></div><div class="dd" style="left:671px;top:72px"></div><div class="dd" style="left:716px;top:72px"></div><div class="dd" style="left:870px;top:72px"></div><div class="dd" style="left:1037px;top:72px"></div><div class="dd" style="left:1210px;top:71px"></div><div class="dd" style="left:205px;top:109px"></div><div class="dd" style="left:451px;top:109px"></div><div class="vsep" style="left:190px;top:65px"></div><div class="vsep" style="left:590px;top:65px"></div><div class="vsep" style="left:222px;top:102px"></div><div class="vsep" style="left:468px;top:102px"></div><svg class="abs" style="left:8px;top:67px" width="5" height="16" fill="#646464"><rect x="0" y="0.00" width="1" height="1"/><rect x="3.2" y="0.00" width="1" height="1"/><rect x="0" y="2.87" width="1" height="1"/><rect x="3.2" y="2.87" width="1" height="1"/><rect x="0" y="5.74" width="1" height="1"/><rect x="3.2" y="5.74" width="1" height="1"/><rect x="0" y="8.61" width="1" height="1"/><rect x="3.2" y="8.61" width="1" height="1"/><rect x="0" y="11.48" width="1" height="1"/><rect x="3.2" y="11.48" width="1" height="1"/><rect x="0" y="14.35" width="1" height="1"/><rect x="3.2" y="14.35" width="1" height="1"/></svg><svg class="abs" style="left:117px;top:67px" width="5" height="16" fill="#646464"><rect x="0" y="0.00" width="1" height="1"/><rect x="3.2" y="0.00" width="1" height="1"/><rect x="0" y="2.87" width="1" height="1"/><rect x="3.2" y="2.87" width="1" height="1"/><rect x="0" y="5.74" width="1" height="1"/><rect x="3.2" y="5.74" width="1" height="1"/><rect x="0" y="8.61" width="1" height="1"/><rect x="3.2" y="8.61" width="1" height="1"/><rect x="0" y="11.48" width="1" height="1"/><rect x="3.2" y="11.48" width="1" height="1"/><rect x="0" y="14.35" width="1" height="1"/><rect x="3.2" y="14.35" width="1" height="1"/></svg><svg class="abs" style="left:235px;top:67px" width="5" height="16" fill="#646464"><rect x="0" y="0.00" width="1" height="1"/><rect x="3.2" y="0.00" width="1" height="1"/><rect x="0" y="2.87" width="1" height="1"/><rect x="3.2" y="2.87" width="1" height="1"/><rect x="0" y="5.74" width="1" height="1"/><rect x="3.2" y="5.74" width="1" height="1"/><rect x="0" y="8.61" width="1" height="1"/><rect x="3.2" y="8.61" width="1" height="1"/><rect x="0" y="11.48" width="1" height="1"/><rect x="3.2" y="11.48" width="1" height="1"/><rect x="0" y="14.35" width="1" height="1"/><rect x="3.2" y="14.35" width="1" height="1"/></svg><svg class="abs" style="left:439px;top:67px" width="5" height="16" fill="#646464"><rect x="0" y="0.00" width="1" height="1"/><rect x="3.2" y="0.00" width="1" height="1"/><rect x="0" y="2.87" width="1" height="1"/><rect x="3.2" y="2.87" width="1" height="1"/><rect x="0" y="5.74" width="1" height="1"/><rect x="3.2" y="5.74" width="1" height="1"/><rect x="0" y="8.61" width="1" height="1"/><rect x="3.2" y="8.61" width="1" height="1"/><rect x="0" y="11.48" width="1" height="1"/><rect x="3.2" y="11.48" width="1" height="1"/><rect x="0" y="14.35" width="1" height="1"/><rect x="3.2" y="14.35" width="1" height="1"/></svg><svg class="abs" style="left:769px;top:67px" width="5" height="16" fill="#646464"><rect x="0" y="0.00" width="1" height="1"/><rect x="3.2" y="0.00" width="1" height="1"/><rect x="0" y="2.87" width="1" height="1"/><rect x="3.2" y="2.87" width="1" height="1"/><rect x="0" y="5.74" width="1" height="1"/><rect x="3.2" y="5.74" width="1" height="1"/><rect x="0" y="8.61" width="1" height="1"/><rect x="3.2" y="8.61" width="1" height="1"/><rect x="0" y="11.48" width="1" height="1"/><rect x="3.2" y="11.48" width="1" height="1"/><rect x="0" y="14.35" width="1" height="1"/><rect x="3.2" y="14.35" width="1" height="1"/></svg><svg class="abs" style="left:923px;top:67px" width="5" height="16" fill="#646464"><rect x="0" y="0.00" width="1" height="1"/><rect x="3.2" y="0.00" width="1" height="1"/><rect x="0" y="2.87" width="1" height="1"/><rect x="3.2" y="2.87" width="1" height="1"/><rect x="0" y="5.74" width="1" height="1"/><rect x="3.2" y="5.74" width="1" height="1"/><rect x="0" y="8.61" width="1" height="1"/><rect x="3.2" y="8.61" width="1" height="1"/><rect x="0" y="11.48" width="1" height="1"/><rect x="3.2" y="11.48" width="1" height="1"/><rect x="0" y="14.35" width="1" height="1"/><rect x="3.2" y="14.35" width="1" height="1"/></svg><svg class="abs" style="left:968px;top:67px" width="5" height="16" fill="#646464"><rect x="0" y="0.00" width="1" height="1"/><rect x="3.2" y="0.00" width="1" height="1"/><rect x="0" y="2.87" width="1" height="1"/><rect x="3.2" y="2.87" width="1" height="1"/><rect x="0" y="5.74" width="1" height="1"/><rect x="3.2" y="5.74" width="1" height="1"/><rect x="0" y="8.61" width="1" height="1"/><rect x="3.2" y="8.61" width="1" height="1"/><rect x="0" y="11.48" width="1" height="1"/><rect x="3.2" y="11.48" width="1" height="1"/><rect x="0" y="14.35" width="1" height="1"/><rect x="3.2" y="14.35" width="1" height="1"/></svg><svg class="abs" style="left:8px;top:104px" width="5" height="16" fill="#646464"><rect x="0" y="0.00" width="1" height="1"/><rect x="3.2" y="0.00" width="1" height="1"/><rect x="0" y="2.87" width="1" height="1"/><rect x="3.2" y="2.87" width="1" height="1"/><rect x="0" y="5.74" width="1" height="1"/><rect x="3.2" y="5.74" width="1" height="1"/><rect x="0" y="8.61" width="1" height="1"/><rect x="3.2" y="8.61" width="1" height="1"/><rect x="0" y="11.48" width="1" height="1"/><rect x="3.2" y="11.48" width="1" height="1"/><rect x="0" y="14.35" width="1" height="1"/><rect x="3.2" y="14.35" width="1" height="1"/></svg><svg class="abs" style="left:513px;top:104px" width="5" height="16" fill="#646464"><rect x="0" y="0.00" width="1" height="1"/><rect x="3.2" y="0.00" width="1" height="1"/><rect x="0" y="2.87" width="1" height="1"/><rect x="3.2" y="2.87" width="1" height="1"/><rect x="0" y="5.74" width="1" height="1"/><rect x="3.2" y="5.74" width="1" height="1"/><rect x="0" y="8.61" width="1" height="1"/><rect x="3.2" y="8.61" width="1" height="1"/><rect x="0" y="11.48" width="1" height="1"/><rect x="3.2" y="11.48" width="1" height="1"/><rect x="0" y="14.35" width="1" height="1"/><rect x="3.2" y="14.35" width="1" height="1"/></svg><svg class="abs" style="left:654px;top:104px" width="5" height="16" fill="#646464"><rect x="0" y="0.00" width="1" height="1"/><rect x="3.2" y="0.00" width="1" height="1"/><rect x="0" y="2.87" width="1" height="1"/><rect x="3.2" y="2.87" width="1" height="1"/><rect x="0" y="5.74" width="1" height="1"/><rect x="3.2" y="5.74" width="1" height="1"/><rect x="0" y="8.61" width="1" height="1"/><rect x="3.2" y="8.61" width="1" height="1"/><rect x="0" y="11.48" width="1" height="1"/><rect x="3.2" y="11.48" width="1" height="1"/><rect x="0" y="14.35" width="1" height="1"/><rect x="3.2" y="14.35" width="1" height="1"/></svg>
<div class="abs" id="wbcombo"><svg class="abs" style="left:6px;top:5px" width="14" height="14" viewBox="0 0 24 24"><path d="M3 8l7-6 4 2v6l3-2.500 4 2v8l-8 5.500-10-5z" fill="url(#gb)" stroke="#163a6e" stroke-width="1.200" stroke-linejoin="round"/><path d="M7 10l7-6v6l-3.500 3v5l-3.500-1.500z" fill="#a6c6ee" fill-opacity=".7"/></svg><span class="abs" style="left:27px;top:0;line-height:24px">Part Design</span><div class="dd" style="left:172px;top:11px;border-top-color:#8a8a8a;border-width:3.500px 4px 0 4px"></div></div>

<div class="abs" style="left:3px;top:131px;width:52px;height:31px;background:#3b3b3b;border-radius:3px 3px 0 0"></div>
<div class="abs" style="left:55px;top:133px;width:47px;height:28px;background:#2a2a2a;border-radius:3px 3px 0 0"></div>
<div class="abs" style="left:8px;top:136px;line-height:22px;color:#f2f2f2;letter-spacing:.5px">Model</div>
<div class="abs" style="left:61px;top:137px;line-height:22px;color:#b4b4b4;letter-spacing:-.5px">Tasks</div>
<div class="abs" style="left:134px;top:162.700px;width:200px;text-align:center;line-height:21px;color:#e4e4e4;letter-spacing:.4px">Model</div>
<svg class="abs" style="left:460px;top:163px" width="70" height="20" viewBox="0 0 70 20"><rect x="2.500" y="2.500" width="14" height="14" fill="none" stroke="#8a8a8a" stroke-width="1"/><path d="M2.500 6.500h14" stroke="#7a7a7a" stroke-width="1"/><path d="M31.500 6.500v-4h10v10h-4" fill="none" stroke="#8a8a8a" stroke-width="1"/><rect x="27.500" y="6.500" width="10" height="10" fill="none" stroke="#8a8a8a" stroke-width="1"/><path d="M53 3l13.500 13.500M66.500 3l-13.500 13.500" stroke="#7c7c7c" stroke-width="2.200"/><path d="M53 3l13.500 13.500M66.500 3l-13.500 13.500" stroke="#383838" stroke-width=".7"/></svg>
<!-- tree -->
<svg class="abs" style="left:3px;top:183px" width="200" height="130" viewBox="3 183 200 130">
<g fill="#f4f4f4"><path d="M8.500 190.600h9l-4.500 4.600z"/><path d="M28.700 211.400h9l-4.500 4.600z"/><path d="M50 231.200l5.200 4.500-5.200 4.500z"/><path d="M49.300 253.200h9l-4.500 4.600z"/></g>
<!-- doc icon -->
<path d="M29 186h7l3.300 3.300v10.700h-10.300z" fill="#f4f4f4" stroke="#bbb" stroke-width=".4"/><path d="M30 193.500l3.500-2.500 3 1v4l-3 2.500-3.500-1z" fill="#2f5aa8"/><path d="M33 190.500c.5-2 3-2.800 4.500-1.500s1 3.500-1 4.200l-3-1z" fill="#d42020"/><path d="M30 193.500l3.500 1.300 3-2.300" fill="none" stroke="#86aee0" stroke-width=".6"/>
<!-- eyes -->
<g><path d="M48 214.500c2-2.700 4-3.300 5.700-3.300s3.700.6 5.700 3.300c-2 2.700-4 3.300-5.700 3.300s-3.700-.6-5.700-3.300z" fill="#f4f4f4"/><circle cx="53.700" cy="214.500" r="2.100" fill="#252525"/><circle cx="54.700" cy="213.800" r=".8" fill="#f4f4f4"/></g>
<g transform="translate(40.300 63)"><path d="M48 214.500c2-2.700 4-3.300 5.700-3.300s3.700.6 5.700 3.300c-2 2.700-4 3.300-5.700 3.300s-3.700-.6-5.700-3.300z" fill="#f4f4f4"/><circle cx="53.700" cy="214.500" r="2.100" fill="#252525"/><circle cx="54.700" cy="213.800" r=".8" fill="#f4f4f4"/></g><g transform="translate(20.300 84)"><path d="M48 214.500c2-2.700 4-3.300 5.700-3.300s3.700.6 5.700 3.300c-2 2.700-4 3.300-5.700 3.300s-3.700-.6-5.700-3.300z" fill="#f4f4f4"/><circle cx="53.700" cy="214.500" r="2.100" fill="#252525"/><circle cx="54.700" cy="213.800" r=".8" fill="#f4f4f4"/></g>
<g><path d="M68.300 235.500c2-2.800 4-3.500 5.700-3.500s3.700.7 5.700 3.500c-2 2.800-4 3.500-5.700 3.500s-3.700-.7-5.700-3.500z" fill="#9c9c9c"/><path d="M69 229.500l10.500 11M71.500 229l8.500 9M68.500 232l8 8.500" stroke="#252525" stroke-width=".9"/><path d="M69 229.500l10.500 11" stroke="#b0b0b0" stroke-width="1"/></g>
<g transform="translate(0 21)"><path d="M68.300 235.500c2-2.800 4-3.500 5.700-3.500s3.700.7 5.700 3.500c-2 2.800-4 3.500-5.700 3.500s-3.700-.7-5.700-3.500z" fill="#9c9c9c"/><path d="M69 229.500l10.500 11M71.500 229l8.500 9M68.500 232l8 8.500" stroke="#252525" stroke-width=".9"/><path d="M69 229.500l10.500 11" stroke="#b0b0b0" stroke-width="1"/></g>
<!-- body icon -->
<path d="M70.500 212l4-4 2.500 1v3.500l2-1.500 2.500 1v4.500l-5 3.500-6-3z" fill="url(#gb)" stroke="#24508f" stroke-width=".6" stroke-linejoin="round"/><path d="M73 213.500l4-4v3.500l-2 1.800v3l-2-1z" fill="#a6c6ee" fill-opacity=".7"/>
<!-- origin icon -->
<path d="M95.500 228.500v8.500l7.500-.800M95.500 237l-5 5" fill="none" stroke="#9a9a9a" stroke-width="1.500"/>
<!-- pad icon grey -->
<path d="M89 259l7-2.500 7 2.500-7 3z" fill="none" stroke="#bdbdbd" stroke-width="1.200" stroke-linejoin="round"/><path d="M89 252.500l7-2.500 7 2.500v4l-7 3-7-3z" fill="#c4c4c4" stroke="#8a8a8a" stroke-width=".6" stroke-linejoin="round"/><path d="M89 252.500l7 2.500 7-2.500M96 255v4.500" fill="none" stroke="#909090" stroke-width=".6"/><path d="M89 252.500l7-2.500 7 2.500-7 2.500z" fill="#e2e2e2"/>
<!-- sketch icon -->
<circle cx="116.500" cy="275.500" r="4.700" fill="none" stroke="#e02626" stroke-width="1.100"/><path d="M115 276.500h-6.500v7h6" fill="none" stroke="#e02626" stroke-width="1.100"/><path d="M114.500 277l7.500 6.500M122 277l-7.500 6.500" stroke="#f2c200" stroke-width="2.400"/>
<!-- fillet icon -->
<path d="M89.500 298l4-5 5-1 4 2.500v5l-6 5-7-2.500z" fill="url(#gb)" stroke="#24508f" stroke-width=".6" stroke-linejoin="round"/><path d="M89.800 297.500c1-3 2.500-4.500 4-5l5-.8 3 2c-2.500.5-5 3-6 6.500z" fill="url(#gr)" stroke="#7a0000" stroke-width=".5"/><circle cx="98.500" cy="300.500" r="4.700" fill="#4fb81a" stroke="#d8f0c8" stroke-width=".7"/><path d="M98.500 297.500v3M95.800 300.500h5.400l-2.700 3z" fill="#fff" stroke="#fff" stroke-width="1.400" stroke-linejoin="round"/>
</svg>
<div class="tr" style="left:48.500px;top:184.0px;font-weight:bold;color:#fff">Unnamed</div>
<div class="tr" style="left:90.500px;top:205.0px;font-weight:bold;color:#fff">Body</div>
<div class="tr" style="left:110.500px;top:226.0px;color:#9e9e9e">Origin</div>
<div class="tr" style="left:110.500px;top:247.0px;color:#9e9e9e">Pad</div>
<div class="tr" style="left:130.500px;top:268.0px;color:#f2f2f2">Sketch</div>
<div class="tr" style="left:110.500px;top:289.0px;color:#f2f2f2">Fillet</div>

<svg class="abs" style="left:536px;top:130px" width="1320" height="846" viewBox="536 130 1320 846">
<defs>
<linearGradient id="mfl" gradientUnits="userSpaceOnUse" x1="772.7" y1="538.5" x2="764.6" y2="563.5"><stop offset="0" stop-color="#595e62"/><stop offset=".35" stop-color="#7b8186"/><stop offset=".7" stop-color="#7a8085"/><stop offset="1" stop-color="#656b70"/></linearGradient>
<linearGradient id="mfr" gradientUnits="userSpaceOnUse" x1="1319" y1="454" x2="1336" y2="471"><stop offset="0" stop-color="#565b5e"/><stop offset=".45" stop-color="#666b70"/><stop offset="1" stop-color="#494d50"/></linearGradient>
<linearGradient id="mbl" gradientUnits="userSpaceOnUse" x1="972" y1="340.500" x2="966" y2="334.500"><stop offset="0" stop-color="#47494b"/><stop offset="1" stop-color="#2b2d2e"/></linearGradient>
<linearGradient id="msl" gradientUnits="userSpaceOnUse" x1="749" y1="560" x2="1125" y2="735"><stop offset="0" stop-color="#5f656a"/><stop offset="1" stop-color="#666c72"/></linearGradient>
<linearGradient id="mcyl" gradientUnits="userSpaceOnUse" x1="958.700" y1="0" x2="1132.500" y2="0"><stop offset="0" stop-color="#393b3d"/><stop offset=".08" stop-color="#45484a"/><stop offset=".25" stop-color="#5d6266"/><stop offset=".45" stop-color="#6c7176"/><stop offset=".62" stop-color="#6b7075"/><stop offset=".82" stop-color="#595e62"/><stop offset=".94" stop-color="#46494b"/><stop offset="1" stop-color="#3e4042"/></linearGradient>
<clipPath id="holeclip"><ellipse cx="1045.600" cy="496.600" rx="86.900" ry="50.300"/></clipPath>
</defs>
<!-- side faces -->
<path d="M749 556.900L1124.800 680.200V738.400L748.500 613z" fill="url(#msl)"/>
<path d="M1124.800 680.200L1342 465V521.500L1125 738.400z" fill="#46494b"/>
<!-- back-left fillet strip -->
<path d="M967.500 334.200L972.100 340.600L772.700 538.500C762 540 752 547 749 556.900L749 555C752 547 756 544 761 541z" fill="#323435"/>
<path d="M967.500 334.200L972.100 340.600L772.700 538.500L761 541z" fill="url(#mbl)"/>
<!-- top face -->
<path d="M972.100 340.600L1319 454L1118.400 652.500L772.700 538.500z" fill="#54595c"/>
<!-- front-left fillet -->
<path d="M772.700 538.500L1118.400 652.500C1122.500 658 1124.500 668 1124.800 680.200L749 556.900C751.500 547 761 540 772.700 538.500z" fill="url(#mfl)"/>
<!-- front-right fillet -->
<path d="M1118.400 652.500L1319 454C1330 453.500 1341.500 458 1342 465.500L1124.800 680.200C1124.500 668 1122.500 658 1118.400 652.500z" fill="url(#mfr)"/>
<!-- hole -->
<ellipse cx="1045.600" cy="496.600" rx="86.900" ry="50.300" fill="url(#mcyl)"/>
<g clip-path="url(#holeclip)"><ellipse cx="1045.600" cy="568.200" rx="86.900" ry="50.300" fill="#3d3d3d" stroke="#ffffff" stroke-width="2"/></g>
<ellipse cx="1045.600" cy="496.600" rx="86.900" ry="50.300" fill="none" stroke="#000" stroke-width="1.700"/>
<!-- black edges -->
<g fill="none" stroke="#000" stroke-width="1.700" stroke-linejoin="round" stroke-linecap="round">
<path d="M972.100 340.600L1319 454"/>
<path d="M972.100 340.600L772.700 538.500L1118.400 652.500L1319 454"/>
<path d="M772.700 538.500C761 540 751.500 547 749 556.900V612.500"/>
<path d="M749 556.900L1124.800 680.200V738"/>
<path d="M1118.400 652.500C1122.500 658 1124.500 668 1124.800 680.200L1342 465.500"/>
<path d="M1319 454C1330 453.500 1341.500 458 1342 465.500V521"/>
</g>
<path d="M969 336.500L1319 452.500" stroke="#2c2d2e" stroke-width="1.200" fill="none"/>
<!-- white edges -->
<path d="M748 612.800L1125 738.600L1342.500 521.500" fill="none" stroke="#ffffff" stroke-width="2" stroke-linejoin="miter"/>

<!-- nav cube -->
<g fill="#6f6f6f">
<path d="M1785 136.500L1796.700 148.800H1773.500z"/><path d="M1785 267.900L1796.700 254.900H1773.500z"/>
<path d="M1719.500 201.500L1732.500 190.700V213z"/><path d="M1850.800 201.500L1837.800 190.700V213z"/>
<circle cx="1842.100" cy="144.500" r="6.500"/>
<path d="M1736 170.500C1737 166 1737.500 161 1738 156.500C1746 149.500 1756 145 1766.500 142.800L1768.200 150.500C1758.500 152.500 1750.500 157 1744.500 163C1746 164 1747.500 165 1749 166.500z"/>
<path d="M1834.200 170.500C1833.200 166 1832.700 161 1832.200 156.500C1824.200 149.500 1814.200 145 1803.700 142.800L1802 150.500C1811.700 152.500 1819.700 157 1825.700 163C1824.200 164 1822.700 165 1821.200 166.500z"/>
</g>
<g stroke="#3a3a3a" stroke-width=".8" stroke-linejoin="round">
<path d="M1772.900 160.600L1782.500 159.600L1812.300 169.200L1823.900 183.300L1824.400 212.600L1818.800 226.800L1800.700 238.900L1787.500 244.400L1783.500 242.900L1755.200 231.800L1746.100 218.700L1745.600 192.400L1755.700 177.300z" fill="#6d6d6d"/>
<path d="M1758.700 183.300L1755.700 177.300L1772.900 160.600L1782.500 159.600L1811.800 169.200L1813.300 175.300L1797.600 190.900L1786.500 192.400z" fill="#727272"/>
<path d="M1758.700 183.300L1786.500 192.400L1783 202.500L1755.200 193.400z" fill="#6f6f6f"/>
<path d="M1786.500 192.400L1797.600 190.900L1803.700 198.500L1801.200 208.600L1789.500 210.100L1783 202.500z" fill="#6f6f6f"/>
<path d="M1797.600 190.900L1813.300 175.300L1819.800 183.300L1803.700 198.500z" fill="#6f6f6f"/>
<path d="M1755.200 193.400L1783 202.500L1789.500 210.100V236.900L1783.500 242.900L1755.200 231.800L1748.100 219.700V197.500z" fill="#6b6b6b"/>
<path d="M1789.500 210.100L1801.200 208.600L1800.700 236.900H1789.500z" fill="#707070"/>
<path d="M1803.700 198.500L1819.800 183.300L1824.400 184.300V212.600L1818.800 226.800L1800.700 236.900L1801.200 208.600z" fill="#696969"/>
<path d="M1789.500 236.900H1800.700V238.900L1787.500 244.400L1783.500 242.900z" fill="#737373"/>
</g>
<g font-family="Liberation Sans,sans-serif" font-size="8.500" fill="#404040" text-anchor="middle">
<text transform="translate(1785.300 178.700) rotate(17) skewX(-28)" font-size="11.500">TOP</text>
<text transform="translate(1769 220.500) rotate(20) skewX(8)" font-size="11.200">FRONT</text>
<text transform="translate(1814.500 214) rotate(-52) skewX(-10)" font-size="9.200">RIGHT</text>
</g>
<path d="M1738.200 237.600V194.300" stroke="#2c2c8c" stroke-width="2.600"/>
<path d="M1738.200 237.600L1763.500 212.300" stroke="#55c455" stroke-width="1.200"/>
<path d="M1738.200 237.600L1782.300 252" stroke="#a42c34" stroke-width="2.600"/>
<!-- mini cube -->
<g stroke="#3a3a3a" stroke-width=".7" fill="#707070" stroke-linejoin="round"><path d="M1820 243.500L1830 239.500L1839.500 243V255L1830 259.500L1820 255.500z"/><path d="M1820 243.500L1830 247L1839.500 243M1830 247V259.500" fill="none"/></g>

<!-- axis cross -->
<path d="M1815 933.800V914" stroke="#3838a8" stroke-width="2"/><path d="M1815 905.500L1818 915.500H1812z" fill="#3838a8"/>
<path d="M1815 933.800L1822 927" stroke="#359a35" stroke-width="2"/><path d="M1827.500 922L1824.500 929.500L1819.500 924.500z" fill="#359a35"/>
<path d="M1815 933.800L1832 939" stroke="#a01c1c" stroke-width="2"/><path d="M1841.500 942L1831.500 942.500L1833.500 936z" fill="#b01c1c"/>
<g font-family="Liberation Sans,sans-serif" font-size="9.500" fill="#000" text-anchor="middle"><text x="1818.500" y="905">Z</text><text x="1830.500" y="920.500">Y</text><text x="1846.500" y="942">X</text></g>
</svg>

<div class="abs" style="left:3px;top:978px;width:45px;height:30px;background:#2a2a2a"></div>
<div class="abs" style="left:48px;top:978px;width:40px;height:30px;background:#383838;border:1px solid #2a2a2a;border-radius:0 0 3px 3px"></div>
<div class="abs" style="left:8px;top:981px;line-height:22px;color:#a8a8a8;letter-spacing:.5px">View</div>
<div class="abs" style="left:52.500px;top:983px;line-height:22px;color:#f2f2f2">Data</div>
<div class="abs" style="left:5px;top:1016px;line-height:22px;color:#f0f0f0;white-space:pre">Preselected: Unnamed.Body.Fillet.Face3 (1.63 mm, 0.22 mm, 8.91 mm)</div>
<!-- mdi tabs -->
<div class="abs" style="left:537px;top:976px;width:99px;height:29px;background:#252525;border-radius:0 0 3px 3px"></div>
<div class="abs" style="left:636px;top:976px;width:156px;height:32px;background:#3a3a3a;border:1px solid #2a2a2a;border-top:none;border-radius:0 0 4px 4px"></div>
<div class="abs" style="left:567px;top:981px;line-height:22px;color:#b8b8b8">Start</div>
<div class="abs" style="left:666px;top:981.500px;line-height:22px;color:#f2f2f2;white-space:pre">Unnamed : 1*</div>
<svg class="abs" style="left:537px;top:976px" width="256" height="32" viewBox="537 976 256 32">
<path d="M614.500 987.500l11 11M625.500 987.500l-11 11M772.500 987.500l11 11M783.500 987.500l-11 11" stroke="#a2a2a2" stroke-width="2.800" />
<!-- F logo -->
<path d="M543 982.500h13v5h-2.500v2.500h-3v3h-2.500v5h-5z" fill="#d43a3a"/><path d="M545 984h11v4h-3v2.500h-3v3h-2.500v4.500h-2.500z" fill="#fff"/><path d="M547 990h4.500v-2.500h5v3h-2v2.500h-3v4h-4.500z" fill="#4a8fe0"/>
<!-- doc icon -->
<path d="M642.500 984.500h7l3.300 3.300v10.700h-10.300z" fill="#f4f4f4" stroke="#bbb" stroke-width=".4"/><path d="M643.500 992l3.500-2.500 3 1v4l-3 2.500-3.500-1z" fill="#2f5aa8"/><path d="M646.500 989c.5-2 3-2.800 4.500-1.500s1 3.500-1 4.200l-3-1z" fill="#d42020"/>
</svg>
<!-- status combos -->
<div class="abs sb" style="left:1485px;width:91px"></div>
<div class="abs sb" style="left:1581px;width:91px"></div>
<div class="abs sb" style="left:1677px;width:179px"></div>
<div class="abs" style="left:1488px;top:1019px;width:14px;height:12px;background:linear-gradient(#3f7fd0,#2d62ac)"></div>
<div class="abs" style="left:1506px;top:1015.500px;line-height:22px">3</div>
<svg class="abs" style="left:1599px;top:1019px" width="10" height="14" viewBox="0 0 10 14"><rect x="1.200" y=".800" width="7.600" height="12" rx="3.800" fill="none" stroke="#d8d8d8" stroke-width="1.300"/><path d="M5 3v3" stroke="#d8d8d8" stroke-width="1.300"/></svg>
<div class="abs" style="left:1615px;top:1015.500px;line-height:22px">CAD</div>
<div class="abs" style="left:1683px;top:1015.500px;line-height:22px;white-space:pre">152.04 mm x 97.37 mm</div>
<div class="dd" style="left:1564px;top:1027px"></div><div class="dd" style="left:1660px;top:1027px"></div><div class="dd" style="left:1844px;top:1027px"></div>

</body>
</html>
